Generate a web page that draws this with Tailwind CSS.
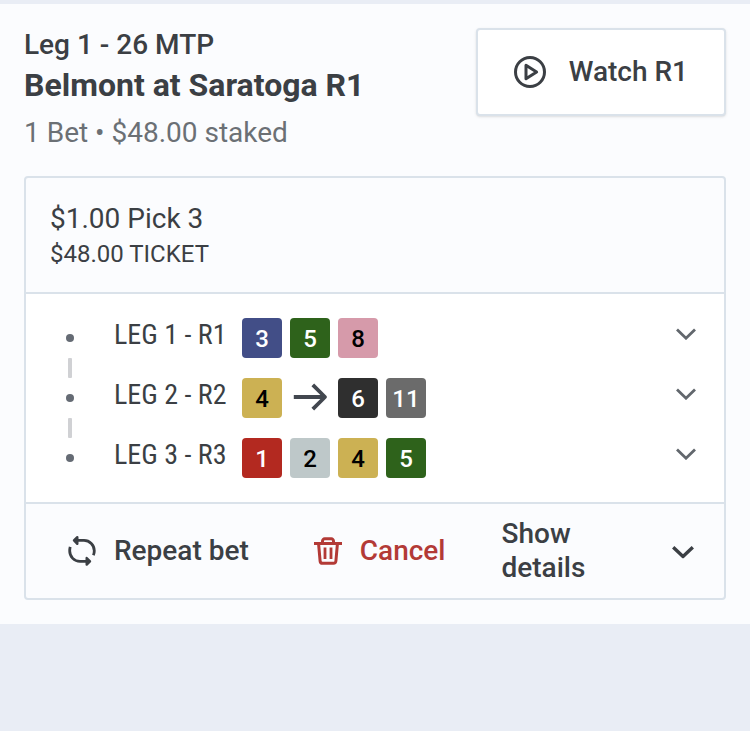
<!DOCTYPE html>
<html lang="en" class="h-full">
<head>
    <meta charset="UTF-8">
    <meta name="viewport" content="width=device-width, initial-scale=1.0">
    <title>My Bets</title>
    <script src="https://cdn.jsdelivr.net/npm/@tailwindcss/browser@4"></script>
</head>
<body class="min-h-full bg-[#e9edf5] pt-1 font-[Roboto,sans-serif] text-[#3b3f44]">
    <main class="bg-[#fbfcfe] p-6">
        <!-- Race header -->
        <header class="flex items-start justify-between">
            <div>
                <p class="text-[28px] leading-[34px] font-medium">Leg 1 - 26 MTP</p>
                <h1 class="text-[32px] leading-[46px] font-bold">Belmont at Saratoga R1</h1>
                <p class="mt-2 text-[28px] leading-[34px] text-[#6b7075]">1 Bet • $48.00 staked</p>
            </div>
            <button type="button" class="flex h-[88px] items-center gap-[23px] rounded border-2 border-[#dae2ea] bg-white px-9 text-[28px] leading-[34px] font-medium shadow">
                <svg class="size-8" viewBox="0 0 32 32" fill="none" stroke="currentColor" stroke-width="3">
                    <circle cx="16" cy="16" r="14.5" />
                    <path d="M12 9.3v13.4l10.6-6.7z" stroke-linejoin="round" />
                </svg>
                Watch R1
            </button>
        </header>

        <!-- Ticket -->
        <section class="mt-[26px] rounded border-2 border-[#dae2ea]">
            <div class="px-6 py-[22px]">
                <h2 class="text-[28px] leading-[38px]">$1.00 Pick 3</h2>
                <p class="text-2xl leading-8">$48.00 TICKET</p>
            </div>

            <ol class="flex flex-col gap-5 border-y-2 border-[#dae2ea] bg-white py-6 pr-7 pl-10">
                <li class="flex items-start">
                    <div class="relative flex h-10 w-2 items-center">
                        <span class="size-2 rounded-full bg-[#656b74]"></span>
                        <span class="absolute top-10 left-0.5 h-5 w-1 rounded-[1px] bg-[#d0d1d4]"></span>
                    </div>
                    <span class="ml-10 w-32 font-['Roboto_Condensed',Roboto,sans-serif] text-[28px] leading-[34px] whitespace-nowrap">LEG 1 - R1</span>
                    <div class="flex gap-2 text-2xl leading-[42px] font-medium text-white text-center">
                        <span class="size-10 rounded bg-[#424e87]">3</span>
                        <span class="size-10 rounded bg-[#2e621b]">5</span>
                        <span class="size-10 rounded bg-[#d69aaa] text-black">8</span>
                    </div>
                    <button type="button" aria-label="Leg 1 runners" class="ml-auto flex h-8 items-center text-[#62676d]">
                        <svg class="h-3 w-5" viewBox="0 0 20 12" fill="none" stroke="currentColor" stroke-width="2.8"><path d="M1 1.6 10 10.200l9-8.600" /></svg>
                    </button>
                </li>
                <li class="flex items-start">
                    <div class="relative flex h-10 w-2 items-center">
                        <span class="size-2 rounded-full bg-[#656b74]"></span>
                        <span class="absolute top-10 left-0.5 h-5 w-1 rounded-[1px] bg-[#d0d1d4]"></span>
                    </div>
                    <span class="ml-10 w-32 font-['Roboto_Condensed',Roboto,sans-serif] text-[28px] leading-[34px] whitespace-nowrap">LEG 2 - R2</span>
                    <div class="flex gap-2 text-2xl leading-[42px] font-medium text-white text-center">
                        <span class="size-10 rounded bg-[#ccb153] text-black">4</span>
                        <svg class="size-10 text-[#42474f]" viewBox="0 0 40 40" fill="none" stroke="currentColor" stroke-width="3.8" stroke-linejoin="round"><path d="M3.8 19H34.500M22.800 6.800 35 19 22.800 31.200" /></svg>
                        <span class="size-10 rounded bg-[#2f2f2f]">6</span>
                        <span class="size-10 rounded bg-[#6b6b6b]">11</span>
                    </div>
                    <button type="button" aria-label="Leg 2 runners" class="ml-auto flex h-8 items-center text-[#62676d]">
                        <svg class="h-3 w-5" viewBox="0 0 20 12" fill="none" stroke="currentColor" stroke-width="2.8"><path d="M1 1.6 10 10.200l9-8.600" /></svg>
                    </button>
                </li>
                <li class="flex items-start">
                    <div class="flex h-10 w-2 items-center">
                        <span class="size-2 rounded-full bg-[#656b74]"></span>
                    </div>
                    <span class="ml-10 w-32 font-['Roboto_Condensed',Roboto,sans-serif] text-[28px] leading-[34px] whitespace-nowrap">LEG 3 - R3</span>
                    <div class="flex gap-2 text-2xl leading-[42px] font-medium text-white text-center">
                        <span class="size-10 rounded bg-[#b32920]">1</span>
                        <span class="size-10 rounded bg-[#bec8c9] text-black">2</span>
                        <span class="size-10 rounded bg-[#ccb153] text-black">4</span>
                        <span class="size-10 rounded bg-[#2e621b]">5</span>
                    </div>
                    <button type="button" aria-label="Leg 3 runners" class="ml-auto flex h-8 items-center text-[#62676d]">
                        <svg class="h-3 w-5" viewBox="0 0 20 12" fill="none" stroke="currentColor" stroke-width="2.8"><path d="M1 1.6 10 10.200l9-8.600" /></svg>
                    </button>
                </li>
            </ol>

            <!-- Actions -->
            <div class="flex h-[94px] items-center pr-[30px] pl-[42px] text-[28px] leading-[34px] font-medium">
                <button type="button" class="flex items-center gap-[18px] whitespace-nowrap">
                    <svg class="h-8 w-7" viewBox="0 0 28 32" fill="none" stroke="currentColor" stroke-width="2.8" stroke-linejoin="round">
                        <path d="M7 5.400h9a10.300 10.300 0 0 1 10.300 10.300q0 2.500-.9 4.600M21 26.400h-9A10.300 10.300 0 0 1 1.700 16.100q0-2.500.5-4.300" />
                        <path d="M9.300 2.200 6 5.400l3.300 3.400zM18.700 23l3.300 3.400-3.300 3.200z" fill="currentColor" stroke-width="2.4" />
                    </svg>
                    Repeat bet
                </button>
                <button type="button" class="ml-[65px] flex items-center gap-[18px] text-[#b33a36]">
                    <svg class="size-7" viewBox="0 0 28 28" fill="none" stroke="currentColor" stroke-width="3">
                        <path d="M0 6.500h28M8.500 6V4a2.200 2.200 0 0 1 2.200-2.200h6.600A2.200 2.200 0 0 1 19.500 4v2M4.600 7l1.500 17a2.500 2.500 0 0 0 2.500 2.300h10.800a2.500 2.500 0 0 0 2.500-2.300L23.400 7" />
                        <path d="M11 10.500v11.500M17 10.500v11.500" stroke-width="2.800" />
                    </svg>
                    Cancel
                </button>
                <button type="button" class="ml-14 flex flex-1 items-center justify-between text-left">
                    <span class="w-min">Show details</span>
                    <svg class="h-4 w-[22px]" viewBox="0 0 22 16" fill="none" stroke="currentColor" stroke-width="3.4" stroke-linejoin="round"><path d="M1.200 4.200 11 13.400l9.800-9.200" /></svg>
                </button>
            </div>
        </section>
    </main>
</body>
</html>
